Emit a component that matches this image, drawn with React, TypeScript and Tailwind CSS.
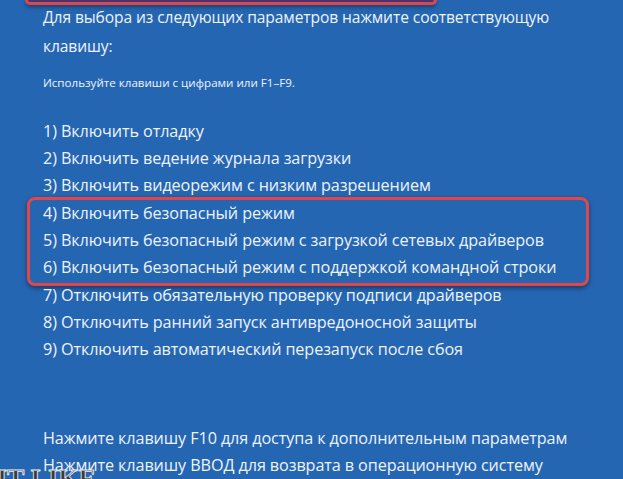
const items = [
  "1) Включить отладку",
  "2) Включить ведение журнала загрузки",
  "3) Включить видеорежим с низким разрешением",
];

const safe = [
  "4) Включить безопасный режим",
  "5) Включить безопасный режим с загрузкой сетевых драйверов",
  "6) Включить безопасный режим с поддержкой командной строки",
];

const rest = [
  "7) Отключить обязательную проверку подписи драйверов",
  "8) Отключить ранний запуск антивредоносной защиты",
  "9) Отключить автоматический перезапуск после сбоя",
];

export default function App() {
  return (
    <div
      className="relative h-[479px] w-[623px] overflow-hidden whitespace-nowrap bg-[#2566b3] text-[#eef3fb]"
      style={{ fontFamily: '"Open Sans", "Noto Sans", sans-serif' }}
    >
      <div className="ml-[25px] h-[5px] w-[412px] rounded-b-[5px] border-x-[3px] border-b-[3px] border-[#d9484f] bg-[#4a3470] shadow-[0_2px_4px_rgba(0,0,0,0.4)]" />

      <div className="pl-[43px]">
        <p className="mt-[-2px] text-[15.6px] leading-[29px] tracking-[-0.1px]">
          Для выбора из следующих параметров нажмите соответствующую
          <br />
          клавишу:
        </p>
        <p className="mt-[14px] text-[11.6px] leading-[16px]">Используйте клавиши с цифрами или F1–F9.</p>

        <div className="mt-[27px] text-[16.2px] leading-[27px] tracking-[-0.1px]">
          {items.map((t) => (
            <div key={t}>{t}</div>
          ))}
          <div className="-ml-[16px] -mt-[2px] mb-[-4px] w-[562px] rounded-[8px] border-[3px] border-[#e0474d] pb-[2px] pl-[13px] shadow-[0_2px_5px_rgba(0,0,0,0.45)]">
            {safe.map((t) => (
              <div key={t}>{t}</div>
            ))}
          </div>
          {rest.map((t) => (
            <div key={t}>{t}</div>
          ))}
        </div>

        <div className="mt-[62px] text-[16.2px] leading-[27px] tracking-[-0.1px]">
          <div>Нажмите клавишу F10 для доступа к дополнительным параметрам</div>
          <div>Нажмите клавишу ВВОД для возврата в операционную систему</div>
        </div>
      </div>

      <div
        className="absolute bottom-[-15px] left-[-3px] text-[26px] font-bold leading-[30px] text-[#3a3a3a]"
        style={{ fontFamily: '"Liberation Serif", serif', WebkitTextStroke: "0.8px #f0f0f0" }}
      >
        IT-LIKE
      </div>
    </div>
  );
}
